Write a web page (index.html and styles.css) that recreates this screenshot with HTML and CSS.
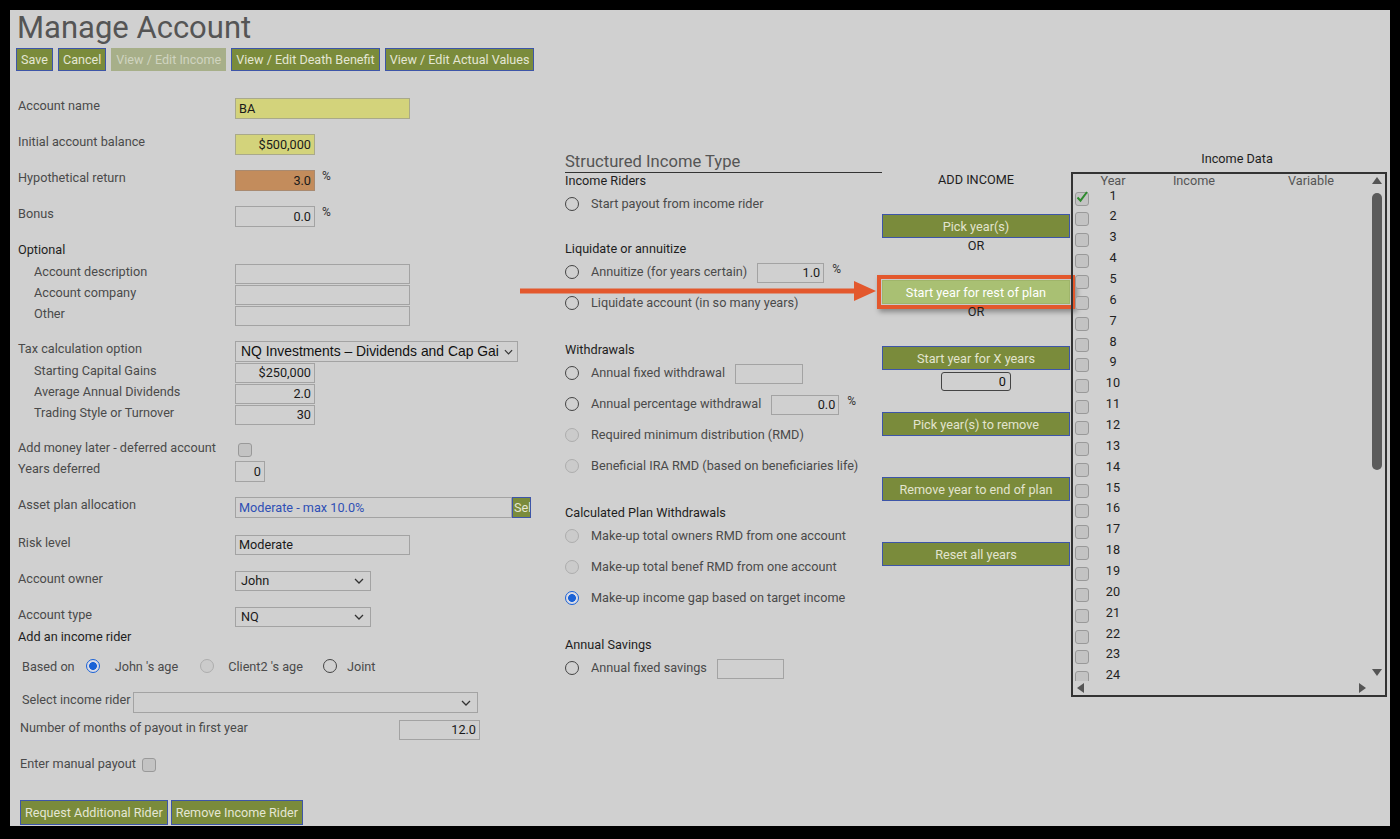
FILE: index.html
```html
<!DOCTYPE html>
<html>
<head>
<meta charset="utf-8">
<title>Manage Account</title>
<link rel="stylesheet" href="styles.css">
</head>
<body>
<div class="frame">
  <h1 class="title">Manage Account</h1>
  <div class="toolbar">
    <button class="btn">Save</button>
    <button class="btn">Cancel</button>
    <button class="btn disabled">View / Edit Income</button>
    <button class="btn">View / Edit Death Benefit</button>
    <button class="btn">View / Edit Actual Values</button>
  </div>

  <div class="main">
    <!-- LEFT COLUMN -->
    <div class="left">
      <div class="row h36"><div class="lbl">Account name</div><div class="fld w175 yellow">BA</div></div>
      <div class="row h36"><div class="lbl">Initial account balance</div><div class="fld w80 yellow num">$500,000</div></div>
      <div class="row h36"><div class="lbl">Hypothetical return</div><div class="fld w80 orange num">3.0</div><span class="pct">%</span></div>
      <div class="row h36"><div class="lbl">Bonus</div><div class="fld w80 num">0.0</div><span class="pct">%</span></div>
      <div class="row h22"><div class="lbl head">Optional</div></div>
      <div class="row h21"><div class="lbl sub">Account description</div><div class="fld w175 h20"></div></div>
      <div class="row h21"><div class="lbl sub">Account company</div><div class="fld w175 h20"></div></div>
      <div class="row h35"><div class="lbl sub">Other</div><div class="fld w175 h20"></div></div>
      <div class="row h22"><div class="lbl">Tax calculation option</div>
        <div class="fld sel w283 arial"><span>NQ Investments – Dividends and Cap Gai</span><svg class="chev" width="9" height="6" viewBox="0 0 10 6"><path d="M1 1l4 4 4-4" fill="none" stroke="#333" stroke-width="1.3"/></svg></div></div>
      <div class="row h21"><div class="lbl sub">Starting Capital Gains</div><div class="fld w80 h20 num">$250,000</div></div>
      <div class="row h21"><div class="lbl sub">Average Annual Dividends</div><div class="fld w80 h20 num">2.0</div></div>
      <div class="row h35"><div class="lbl sub">Trading Style or Turnover</div><div class="fld w80 h20 num">30</div></div>
      <div class="row h21"><div class="lbl">Add money later - deferred account</div><span class="cb cb-left"></span></div>
      <div class="row h36"><div class="lbl">Years deferred</div><div class="fld w30 num">0</div></div>
      <div class="row h38"><div class="lbl">Asset plan allocation</div><div class="fld w277 blue">Moderate - max 10.0%</div><button class="selbtn">Sel</button></div>
      <div class="row h36"><div class="lbl">Risk level</div><div class="fld w175 h20">Moderate</div></div>
      <div class="row h36"><div class="lbl">Account owner</div>
        <div class="fld sel w136 h20"><span>John</span><svg class="chev" width="10" height="6" viewBox="0 0 10 6"><path d="M1 1l4 4 4-4" fill="none" stroke="#333" stroke-width="1.3"/></svg></div></div>
      <div class="row h22"><div class="lbl">Account type</div>
        <div class="fld sel w136 h20"><span>NQ</span><svg class="chev" width="10" height="6" viewBox="0 0 10 6"><path d="M1 1l4 4 4-4" fill="none" stroke="#333" stroke-width="1.3"/></svg></div></div>
      <div class="row h23"><div class="lbl head">Add an income rider</div></div>
      <div class="based">
        <span class="b-lbl">Based on</span>
        <span class="rd on b-r1"></span><span class="b-t1">John 's age</span>
        <span class="rd dis b-r2"></span><span class="b-t2">Client2 's age</span>
        <span class="rd b-r3"></span><span>Joint</span>
      </div>
      <div class="row h28 ind4"><div class="lbl auto">Select income rider</div>
        <div class="fld sel w345"><span></span><svg class="chev" width="10" height="6" viewBox="0 0 10 6"><path d="M1 1l4 4 4-4" fill="none" stroke="#333" stroke-width="1.3"/></svg></div></div>
      <div class="row h36 ind2"><div class="lbl wide">Number of months of payout in first year</div><div class="fld w81 h20 num">12.0</div></div>
      <div class="row h16 ind2"><div class="lbl auto">Enter manual payout</div><span class="cb cb-manual"></span></div>
      <div class="bottom">
        <button class="btn bbtn">Request Additional Rider</button>
        <button class="btn bbtn">Remove Income Rider</button>
      </div>
    </div>

    <!-- MIDDLE COLUMN -->
    <div class="mid">
      <div class="mid-title">Structured Income Type</div>
      <div class="sec sec-a">
        <div class="sec-h">Income Riders</div>
        <div class="rrow"><span class="rd"></span><span>Start payout from income rider</span></div>
      </div>
      <div class="sec sec-b">
        <div class="sec-h">Liquidate or annuitize</div>
        <div class="rrow"><span class="rd"></span><span>Annuitize (for years certain)</span><div class="fld w67 h20 num mfld">1.0</div><span class="pct pct-m">%</span></div>
        <div class="rrow"><span class="rd"></span><span>Liquidate account (in so many years)</span></div>
      </div>
      <div class="sec">
        <div class="sec-h">Withdrawals</div>
        <div class="rrow"><span class="rd"></span><span>Annual fixed withdrawal</span><div class="fld w68 h20 mfld"></div></div>
        <div class="rrow"><span class="rd"></span><span>Annual percentage withdrawal</span><div class="fld w68 h20 num mfld">0.0</div><span class="pct pct-m">%</span></div>
        <div class="rrow"><span class="rd dis"></span><span>Required minimum distribution (RMD)</span></div>
        <div class="rrow"><span class="rd dis"></span><span>Beneficial IRA RMD (based on beneficiaries life)</span></div>
      </div>
      <div class="sec">
        <div class="sec-h">Calculated Plan Withdrawals</div>
        <div class="rrow"><span class="rd dis"></span><span>Make-up total owners RMD from one account</span></div>
        <div class="rrow"><span class="rd dis"></span><span>Make-up total benef RMD from one account</span></div>
        <div class="rrow"><span class="rd on"></span><span>Make-up income gap based on target income</span></div>
      </div>
      <div class="sec">
        <div class="sec-h">Annual Savings</div>
        <div class="rrow"><span class="rd"></span><span>Annual fixed savings</span><div class="fld w67 h20 mfld"></div></div>
      </div>
    </div>

    <!-- ACTIONS COLUMN -->
    <div class="actions">
      <div class="add-title">ADD INCOME</div>
      <button class="abtn">Pick year(s)</button>
      <div class="or">OR</div>
      <button class="abtn hl">Start year for rest of plan</button>
      <div class="or">OR</div>
      <button class="abtn">Start year for X years</button>
      <div class="xinput">0</div>
      <button class="abtn gap21">Pick year(s) to remove</button>
      <button class="abtn gap41">Remove year to end of plan</button>
      <button class="abtn gap41">Reset all years</button>
    </div>

    <!-- INCOME DATA -->
    <div class="income">
      <div class="inc-title">Income Data</div>
      <div class="inc-box">
        <div class="inc-body">
          <div class="inc-list">
            <div class="inc-head"><span></span><span>Year</span><span>Income</span><span>Variable</span></div>
            <div class="inc-row"><span class="cb cb-chk"><svg width="14" height="14" viewBox="0 0 14 14"><path d="M2.5 7.5l3 3.2L12 2" fill="none" stroke="#2e8b2e" stroke-width="2"/></svg></span><span class="yr">1</span></div>
            <div class="inc-row"><span class="cb"></span><span class="yr">2</span></div>
            <div class="inc-row"><span class="cb"></span><span class="yr">3</span></div>
            <div class="inc-row"><span class="cb"></span><span class="yr">4</span></div>
            <div class="inc-row"><span class="cb"></span><span class="yr">5</span></div>
            <div class="inc-row"><span class="cb"></span><span class="yr">6</span></div>
            <div class="inc-row"><span class="cb"></span><span class="yr">7</span></div>
            <div class="inc-row"><span class="cb"></span><span class="yr">8</span></div>
            <div class="inc-row"><span class="cb"></span><span class="yr">9</span></div>
            <div class="inc-row"><span class="cb"></span><span class="yr">10</span></div>
            <div class="inc-row"><span class="cb"></span><span class="yr">11</span></div>
            <div class="inc-row"><span class="cb"></span><span class="yr">12</span></div>
            <div class="inc-row"><span class="cb"></span><span class="yr">13</span></div>
            <div class="inc-row"><span class="cb"></span><span class="yr">14</span></div>
            <div class="inc-row"><span class="cb"></span><span class="yr">15</span></div>
            <div class="inc-row"><span class="cb"></span><span class="yr">16</span></div>
            <div class="inc-row"><span class="cb"></span><span class="yr">17</span></div>
            <div class="inc-row"><span class="cb"></span><span class="yr">18</span></div>
            <div class="inc-row"><span class="cb"></span><span class="yr">19</span></div>
            <div class="inc-row"><span class="cb"></span><span class="yr">20</span></div>
            <div class="inc-row"><span class="cb"></span><span class="yr">21</span></div>
            <div class="inc-row"><span class="cb"></span><span class="yr">22</span></div>
            <div class="inc-row"><span class="cb"></span><span class="yr">23</span></div>
            <div class="inc-row"><span class="cb"></span><span class="yr">24</span></div>
          </div>
          <div class="vscroll">
            <span class="tri-up"></span>
            <span class="thumb"></span>
            <span class="spacer"></span>
            <span class="tri-down"></span>
          </div>
        </div>
        <div class="hscroll"><span class="tri-left"></span><span class="tri-right"></span></div>
      </div>
    </div>
  </div>

  <svg class="arrow" width="362" height="26" viewBox="0 0 362 26">
    <rect x="2" y="10.5" width="337" height="5" fill="#e3582d"/>
    <polygon points="336,3 358,13 336,23" fill="#e3582d"/>
  </svg>
</div>
</body>
</html>
```

FILE: styles.css
```css
* { box-sizing: border-box; }

body {
  margin: 0;
  background: #000;
  font-family: Roboto, "Liberation Sans", sans-serif;
  font-size: 12.7px;
  color: #4a4a4a;
}

.frame {
  margin: 10px 10px 0;
  width: 1380px;
  height: 816px;
  background: #d0d0d0;
  position: relative;
  overflow: hidden;
}

.title {
  margin: 0;
  padding-left: 7px;
  font-weight: 400;
  font-size: 31px;
  line-height: 36px;
  color: #555;
}

.toolbar {
  display: flex;
  gap: 5px;
  margin: 2px 0 0 6px;
}

.btn {
  height: 23px;
  padding: 0 4px;
  background: #7a8b3b;
  border: 1px solid #3d55a8;
  color: #e4e6d4;
  font-family: Roboto, "Liberation Sans", sans-serif;
  font-size: 12.6px;
  border-radius: 0;
  white-space: nowrap;
}
.btn.disabled {
  background: #a7af89;
  border-color: #a7af89;
  color: #d0d4c0;
}

.main {
  display: flex;
  align-items: flex-start;
  margin-top: 27px;
  padding-left: 8px;
}

/* LEFT */
.left { width: 547px; flex: none; }

.row { display: flex; align-items: flex-start; }
.h16 { height: 16px; }
.h21 { height: 21px; }
.h22 { height: 22px; }
.h23 { height: 23px; }
.h28 { height: 28px; }
.h35 { height: 35px; }
.h36 { height: 36px; }
.h38 { height: 38px; }
.ind2 { padding-left: 2px; }
.ind4 { padding-left: 4px; }

.lbl { width: 217px; flex: none; line-height: 16px; white-space: nowrap; }
.lbl.sub { padding-left: 16px; }
.lbl.head { color: #1e1e1e; }
.lbl.auto { width: auto; }
.ind4 .lbl.auto { width: 111px; }
.lbl.wide { width: 379px; }

.fld {
  height: 21px;
  border: 1px solid #a3a3a3;
  line-height: 19px;
  padding: 0 3px;
  color: #1a1a1a;
  font-size: 12.7px;
  overflow: hidden;
  white-space: nowrap;
  flex: none;
}
.fld.h20 { height: 20px; line-height: 18px; }
.fld.num { text-align: right; }
.fld.yellow { background: #d3d37b; border-color: #a9a98a; }
.fld.orange { background: #c38c5c; border-color: #a98a70; }
.fld.blue { color: #2e4fb5; }
.w30 { width: 30px; }
.w67 { width: 67px; }
.w68 { width: 68px; }
.w80 { width: 80px; }
.w81 { width: 81px; }
.w136 { width: 136px; }
.w175 { width: 175px; }
.w277 { width: 277px; }
.w283 { width: 283px; }
.w345 { width: 345px; }

.sel {
  display: flex;
  align-items: center;
  justify-content: space-between;
  padding: 0 6px 0 5px;
}
.sel.arial {
  font-family: "Liberation Sans", Arial, sans-serif;
  font-size: 13.9px;
  color: #111;
  padding: 0 4px 0 5px;
}
.sel.arial span { overflow: hidden; }
.chev { flex: none; }

.pct { margin-left: 7px; line-height: 12px; font-size: 12px; color: #333; }

.cb {
  display: inline-block;
  width: 14px;
  height: 14px;
  border: 1.5px solid #999;
  border-radius: 3px;
  background: #c3c3c3;
  flex: none;
  position: relative;
}
.cb-left { margin: 3px 0 0 3px; }
.cb-manual { margin: 2px 0 0 6px; }

.selbtn {
  width: 19px;
  height: 21px;
  padding: 0 0 0 1px;
  background: #7a8b3b;
  border: 1px solid #3d55a8;
  color: #e4e6d4;
  font-family: Roboto, "Liberation Sans", sans-serif;
  font-size: 12.7px;
  overflow: hidden;
  text-align: left;
  flex: none;
}

.based {
  display: flex;
  align-items: center;
  height: 28px;
  margin-bottom: 12px;
  padding-left: 4px;
  white-space: nowrap;
}
.b-r1 { margin: 0 15px 0 11px; }
.b-r2 { margin: 0 14px 0 22px; }
.b-r3 { margin: 0 10px 0 20px; }

.rd {
  display: inline-block;
  width: 14px;
  height: 14px;
  border-radius: 50%;
  border: 1.5px solid #444;
  flex: none;
}
.rd.dis { border-color: #adadad; background: #cbcbcb; }
.rd.on {
  border: 1.5px solid #1a62d6;
  background: radial-gradient(circle, #1a62d6 0 3.6px, #d9dbe6 4.2px);
}

.bottom {
  display: flex;
  gap: 3px;
  margin-top: 28px;
  padding-left: 2px;
}
.bbtn { height: 25px; padding: 0 4px; }

/* MIDDLE */
.mid { width: 317px; flex: none; margin-top: 54px; }
.mid-title {
  font-size: 16.6px;
  line-height: 20px;
  color: #555;
  border-bottom: 1px solid #333;
}
.sec { margin-top: 25px; }
.sec-a { margin-top: 1px; }
.sec-b { margin-top: 23px; }
.sec-h { line-height: 14px; color: #1e1e1e; }
.rrow {
  height: 31px;
  display: flex;
  align-items: center;
  white-space: nowrap;
}
.rrow .rd { margin-right: 12px; }
.mfld { margin-left: 10px; margin-top: 3px; }
.pct-m { align-self: flex-start; margin-top: 7px; margin-left: 8px; }

/* ACTIONS */
.actions {
  width: 188px;
  flex: none;
  margin-top: 74px;
  display: flex;
  flex-direction: column;
  align-items: center;
  text-align: center;
}
.add-title { line-height: 16px; color: #1e1e1e; }
.abtn {
  width: 188px;
  height: 24px;
  margin-top: 26px;
  background: #7a8b3b;
  border: 1px solid #3d55a8;
  color: #e2e4cf;
  font-family: Roboto, "Liberation Sans", sans-serif;
  font-size: 12.7px;
  padding: 0;
}
.abtn.hl {
  background: #a9c073;
  border-color: #9fb56a;
  color: #fff;
  box-shadow: 0 0 0 1px #c9c9c9, 0 0 0 5px #e3582d, 2px 3px 5px 5px rgba(0,0,0,0.35);
}
.abtn.gap21 { margin-top: 21px; }
.abtn.gap41 { margin-top: 41px; }
.or { line-height: 16px; color: #1e1e1e; }
.xinput {
  width: 70px;
  height: 19px;
  margin-top: 2px;
  border: 1px solid #444;
  border-radius: 3px;
  text-align: right;
  padding-right: 4px;
  line-height: 17px;
  color: #111;
}

/* INCOME DATA */
.income { width: 316px; flex: none; margin-left: 1px; margin-top: 53px; }
.inc-title { text-align: center; line-height: 16px; color: #1e1e1e; padding-left: 16px; }
.inc-box {
  margin-top: 5px;
  height: 525px;
  border: 2px solid #333;
  display: flex;
  flex-direction: column;
}
.inc-body { flex: 1; display: flex; min-height: 0; overflow: hidden; }
.inc-list { flex: 1; overflow: hidden; }
.inc-head, .inc-row {
  display: grid;
  grid-template-columns: 20px 40px 122px 112px;
}
.inc-head { line-height: 14px; color: #555; text-align: center; }
.inc-row { height: 20.87px; }
.inc-row .cb { margin: 3.5px 0 0 2px; }
.cb-chk svg { position: absolute; left: -1.5px; top: -2.5px; }
.yr { text-align: center; line-height: 10px; padding-top: 2.5px; color: #222; }

.vscroll {
  width: 17px;
  flex: none;
  display: flex;
  flex-direction: column;
  align-items: center;
}
.tri-up {
  margin-top: 3px;
  width: 0; height: 0;
  border-left: 5px solid transparent;
  border-right: 5px solid transparent;
  border-bottom: 7px solid #555;
}
.thumb {
  margin-top: 9px;
  width: 10px;
  height: 277px;
  border-radius: 5px;
  background: #5b5b5b;
}
.spacer { flex: 1; }
.tri-down {
  margin-bottom: 5px;
  width: 0; height: 0;
  border-left: 5px solid transparent;
  border-right: 5px solid transparent;
  border-top: 7px solid #555;
}
.hscroll {
  height: 14px;
  flex: none;
  display: flex;
  justify-content: space-between;
  align-items: center;
  padding: 0 19px 0 4px;
}
.tri-left {
  width: 0; height: 0;
  border-top: 5px solid transparent;
  border-bottom: 5px solid transparent;
  border-right: 7px solid #555;
}
.tri-right {
  width: 0; height: 0;
  border-top: 5px solid transparent;
  border-bottom: 5px solid transparent;
  border-left: 7px solid #555;
}

/* annotation arrow overlay */
.arrow {
  position: absolute;
  left: 508px;
  top: 268px;
  pointer-events: none;
}
```
